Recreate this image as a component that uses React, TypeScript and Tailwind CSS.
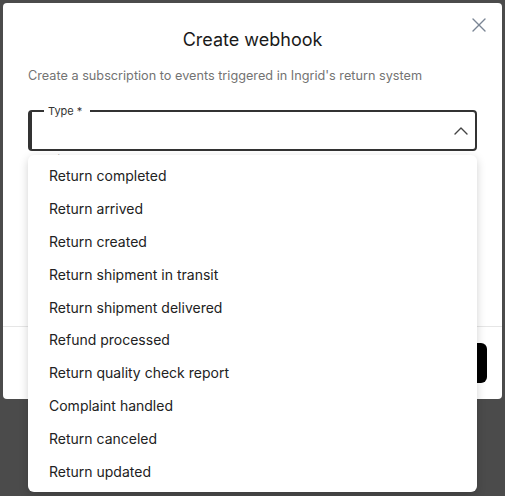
import React from "react";
import { X, ChevronUp } from "lucide-react";

const items = [
  "Return completed",
  "Return arrived",
  "Return created",
  "Return shipment in transit",
  "Return shipment delivered",
  "Refund processed",
  "Return quality check report",
  "Complaint handled",
  "Return canceled",
  "Return updated",
];

export default function App() {
  return (
    <div
      className="relative w-[505px] h-[496px] overflow-hidden bg-[#4b4b4b] p-[3px]"
      style={{ fontFamily: "Inter, 'Noto Sans', sans-serif" }}
    >
      <div className="relative flex h-[396px] w-[499px] flex-col rounded-[4px] bg-white">
        <button className="absolute right-[11px] top-[10px] text-[#7a8594]">
          <X size={24} strokeWidth={1.4} />
        </button>
        <div className="flex flex-1 flex-col px-[25px] pt-[23px]">
          <h2 className="text-center text-[18px] leading-[28px] text-[#1a1a1a]">Create webhook</h2>
          <p className="mt-[13px] text-[12.7px] leading-[18px] text-[#737373]">
            Create a subscription to events triggered in Ingrid's return system
          </p>
          <div className="relative z-10 mt-[25px] flex h-[41px] items-center justify-end rounded-[4px] border-2 border-l-4 border-[#333333] bg-white pr-[2px]">
            <span className="absolute left-[12px] top-[-8px] bg-white pl-[4px] pr-[8px] text-[11px] leading-[14px] text-[#333333]">
              Type *
            </span>
            <ChevronUp size={24} strokeWidth={1.4} className="text-[#444444]" />
          </div>
          <div className="mt-[1px] flex flex-col">
            <span className="pl-[16px] text-[11px] leading-[14px] text-[#777777]">Return URL *</span>
            <div className="h-[40px] rounded-[4px] border border-[#c4c4c4]" />
          </div>
        </div>
        <div className="flex justify-end border-t border-[#e6e6e6] py-[16px] pr-[15px]">
          <button className="h-[40px] w-[120px] rounded-[6px] bg-black text-[14px] text-white">Create</button>
        </div>
      </div>
      <div className="absolute z-20 left-[28px] top-[155px] w-[449px] rounded-[6px] bg-white py-[4px] shadow-[0_3px_10px_rgba(0,0,0,0.18)]">
        {items.map((t) => (
          <div
            key={t}
            className="flex h-[32.9px] items-center pl-[21px] text-[14px] text-[#222222]"
          >
            {t}
          </div>
        ))}
      </div>
    </div>
  );
}
